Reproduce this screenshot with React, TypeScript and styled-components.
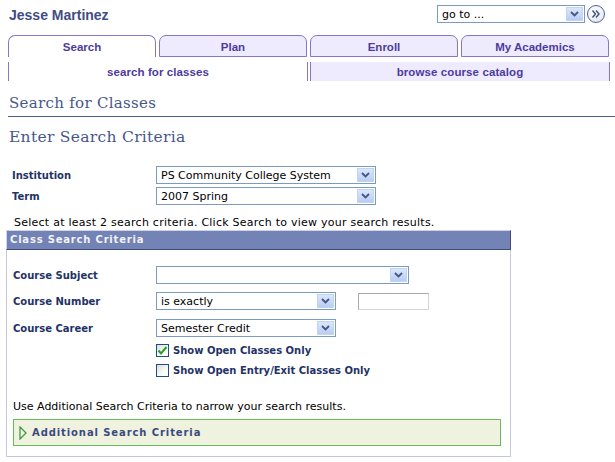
import React from 'react';
import styled, { createGlobalStyle } from 'styled-components';

const GlobalStyle = createGlobalStyle`
  body {
    margin: 0;
    background: #fff;
    font-family: "DejaVu Sans", Verdana, sans-serif;
  }
`;

const Page = styled.div`
  width: 615px;
  height: 462px;
  overflow: hidden;
`;

const Header = styled.div`
  display: flex;
  justify-content: space-between;
  align-items: flex-start;
  height: 35px;
  padding: 5px 10px 0 9px;
  box-sizing: border-box;
`;

const UserName = styled.div`
  font-family: "Liberation Sans", Arial, sans-serif;
  font-weight: bold;
  font-size: 14px;
  line-height: 20px;
  color: #3f4d86;
`;

const GotoRow = styled.div`
  display: flex;
  align-items: center;
  gap: 2px;
`;

const GoButton = styled.div`
  width: 16px;
  height: 16px;
  border: 1px solid #55638f;
  border-radius: 50%;
  background: radial-gradient(circle at 40% 35%, #ffffff, #dde4f0);
  display: flex;
  align-items: center;
  justify-content: center;
`;

const TabBar = styled.div`
  display: flex;
  gap: 3px;
  padding-left: 8px;
`;

const Tab = styled.div<{ active?: boolean }>`
  width: 148px;
  height: 22px;
  box-sizing: border-box;
  border: 1px solid #8676ca;
  border-bottom: ${(p) => (p.active ? 'none' : '1px solid #8676ca')};
  border-radius: 7px 7px 0 0;
  background: ${(p) => (p.active ? '#fff' : '#eeebff')};
  font-family: "Liberation Sans", Arial, sans-serif;
  font-weight: bold;
  font-size: 11.5px;
  line-height: 23px;
  text-align: center;
  color: #4d3b9d;
  overflow: hidden;
`;

const SubTabBar = styled.div`
  display: flex;
  gap: 2px;
  padding-left: 8px;
  margin-top: 5px;
`;

const SubTab = styled.div<{ active?: boolean }>`
  width: 300px;
  height: 19px;
  box-sizing: border-box;
  border-left: 1px solid #8676ca;
  border-right: 1px solid #8676ca;
  background: ${(p) => (p.active ? '#fff' : '#eeebff')};
  font-family: "Liberation Sans", Arial, sans-serif;
  font-weight: bold;
  font-size: 11.5px;
  letter-spacing: 0.1px;
  line-height: 20px;
  text-align: center;
  color: #4d3b9d;
`;

const PageTitle = styled.h1`
  margin: 13px 0 0 8px;
  padding: 0 0 4px 1px;
  border-bottom: 1px solid #4f5d90;
  font-family: "DejaVu Serif", Georgia, serif;
  font-weight: normal;
  font-size: 15px;
  line-height: 18px;
  letter-spacing: 0.3px;
  color: #47578a;
`;

const SubTitle = styled.h2`
  margin: 10px 0 0 9px;
  font-family: "DejaVu Serif", Georgia, serif;
  font-weight: normal;
  font-size: 15.5px;
  line-height: 20px;
  letter-spacing: 0.3px;
  color: #47578a;
`;

const FormGrid = styled.div<{ left: number }>`
  display: grid;
  grid-template-columns: ${(p) => 156 - p.left}px auto;
  align-items: center;
  row-gap: 3px;
`;

const Label = styled.div`
  font-size: 10px;
  font-weight: bold;
  color: #1f3366;
`;

const TopForm = styled.div`
  margin: 19px 0 0 12px;
`;

const Instruction = styled.div`
  margin: 11px 0 0 14px;
  font-size: 11px;
  letter-spacing: 0.25px;
  line-height: 14px;
  color: #000;
`;

const CriteriaBox = styled.div`
  width: 505px;
  margin: 0 0 0 6px;
`;

const CriteriaHeader = styled.div`
  height: 20px;
  box-sizing: border-box;
  background: #7383b6;
  border-top: 1px solid #cfd4e4;
  border-left: 1px solid #cfd4e4;
  border-right: 1px solid #3e4c7c;
  border-bottom: 1px solid #3e4c7c;
  padding-left: 3px;
  font-size: 10px;
  font-weight: bold;
  line-height: 18px;
  letter-spacing: 0.8px;
  color: #f2f2f2;
`;

const CriteriaBody = styled.div`
  height: 207px;
  box-sizing: border-box;
  border: 1px solid #c3c9db;
  border-top: none;
  padding: 16px 0 0 6px;
`;

const FieldRow = styled.div<{ gap?: number }>`
  display: flex;
  align-items: center;
  gap: ${(p) => p.gap ?? 0}px;
`;

const Spacer = styled.div<{ h: number }>`
  height: ${(p) => p.h}px;
`;

const SelectBox = styled.div<{ w: number }>`
  width: ${(p) => p.w}px;
  height: 18px;
  box-sizing: border-box;
  border: 1px solid #7b9cc0;
  background: #fff;
  display: flex;
  align-items: center;
  justify-content: space-between;
  padding: 0 1px 0 4px;
  font-size: 11px;
  color: #000;
  white-space: nowrap;
`;

const ArrowBox = styled.div`
  width: 17px;
  height: 14px;
  background: linear-gradient(#dbe6fb, #b8cdf5);
  border: 1px solid #c3d3f1;
  box-sizing: border-box;
  display: flex;
  align-items: center;
  justify-content: center;
  flex-shrink: 0;
`;

const TextInput = styled.div`
  width: 71px;
  height: 17px;
  box-sizing: border-box;
  border: 1px solid #a9a9a9;
  border-right-color: #d4d4d4;
  border-bottom-color: #d4d4d4;
  background: #fff;
`;

const CheckRow = styled.div<{ spaced?: boolean }>`
  display: flex;
  align-items: center;
  gap: 4px;
  grid-column: 2;
  height: 17px;
  margin-top: ${(p) => (p.spaced ? 2 : 0)}px;
`;

const CheckBox = styled.div`
  width: 13px;
  height: 13px;
  box-sizing: border-box;
  border: 1px solid #1d4f86;
  background: linear-gradient(135deg, #dcdcd6, #ffffff 70%);
  display: flex;
  align-items: center;
  justify-content: center;
`;

const CheckLabel = styled.span`
  font-size: 10px;
  font-weight: bold;
  color: #1f3366;
`;

const Note = styled.div`
  margin: 21px 0 0 0;
  font-size: 11px;
  line-height: 14px;
  color: #000;
`;

const Additional = styled.div`
  width: 488px;
  height: 27px;
  box-sizing: border-box;
  margin-top: 5px;
  border: 1px solid #67bd57;
  background: #eff2de;
  display: flex;
  align-items: center;
  gap: 5px;
  padding-left: 5px;
`;

const AdditionalText = styled.span`
  font-size: 10px;
  font-weight: bold;
  letter-spacing: 0.9px;
  color: #3a4a80;
`;

const Chevron = () => (
  <svg width="9" height="6" viewBox="0 0 9 6">
    <path d="M1 1 L4.5 4.5 L8 1" fill="none" stroke="#44577c" strokeWidth="1.8" />
  </svg>
);

const DoubleChevron = () => (
  <svg width="10" height="10" viewBox="0 0 10 10">
    <path d="M1.5 1.5 L4.5 5 L1.5 8.5 M5 1.5 L8 5 L5 8.5" fill="none" stroke="#3f4f80" strokeWidth="1.4" />
  </svg>
);

const Select = ({ w, value }: { w: number; value?: string }) => (
  <SelectBox w={w}>
    <span>{value}</span>
    <ArrowBox>
      <Chevron />
    </ArrowBox>
  </SelectBox>
);

const Check = ({ checked, spaced, label }: { checked?: boolean; spaced?: boolean; label: string }) => (
  <CheckRow spaced={spaced}>
    <CheckBox>
      {checked && (
        <svg width="11" height="11" viewBox="0 0 11 11">
          <path d="M1.5 5.5 L4 8.5 L9.5 2" fill="none" stroke="#22a322" strokeWidth="2" />
        </svg>
      )}
    </CheckBox>
    <CheckLabel>{label}</CheckLabel>
  </CheckRow>
);

const tabs = ['Search', 'Plan', 'Enroll', 'My Academics'];

export default function App() {
  return (
    <Page>
      <GlobalStyle />
      <Header>
        <UserName>Jesse Martinez</UserName>
        <GotoRow>
          <Select w={148} value="go to ..." />
          <GoButton>
            <DoubleChevron />
          </GoButton>
        </GotoRow>
      </Header>

      <TabBar>
        {tabs.map((t, i) => (
          <Tab key={t} active={i === 0}>
            {t}
          </Tab>
        ))}
      </TabBar>
      <SubTabBar>
        <SubTab active>search for classes</SubTab>
        <SubTab>browse course catalog</SubTab>
      </SubTabBar>

      <PageTitle>Search for Classes</PageTitle>
      <SubTitle>Enter Search Criteria</SubTitle>

      <TopForm>
        <FormGrid left={12}>
          <Label>Institution</Label>
          <Select w={220} value="PS Community College System" />
          <Label>Term</Label>
          <Select w={220} value="2007 Spring" />
        </FormGrid>
      </TopForm>

      <Instruction>
        Select at least 2 search criteria. Click Search to view your search results.
      </Instruction>

      <CriteriaBox>
        <CriteriaHeader>Class Search Criteria</CriteriaHeader>
        <CriteriaBody>
          <FormGrid left={13}>
            <Label>Course Subject</Label>
            <Select w={253} />
          </FormGrid>
          <Spacer h={8} />
          <FormGrid left={13}>
            <Label>Course Number</Label>
            <FieldRow gap={22}>
              <Select w={180} value="is exactly" />
              <TextInput />
            </FieldRow>
          </FormGrid>
          <Spacer h={9} />
          <FormGrid left={13}>
            <Label>Course Career</Label>
            <Select w={180} value="Semester Credit" />
            <Check checked spaced label="Show Open Classes Only" />
            <Check label="Show Open Entry/Exit Classes Only" />
          </FormGrid>
          <Note>Use Additional Search Criteria to narrow your search results.</Note>
          <Additional>
            <svg width="8" height="14" viewBox="0 0 8 14">
              <path d="M1 1 L7 7 L1 13 Z" fill="#f4f8ea" stroke="#3d9a3d" strokeWidth="1.3" />
            </svg>
            <AdditionalText>Additional Search Criteria</AdditionalText>
          </Additional>
        </CriteriaBody>
      </CriteriaBox>
    </Page>
  );
}
